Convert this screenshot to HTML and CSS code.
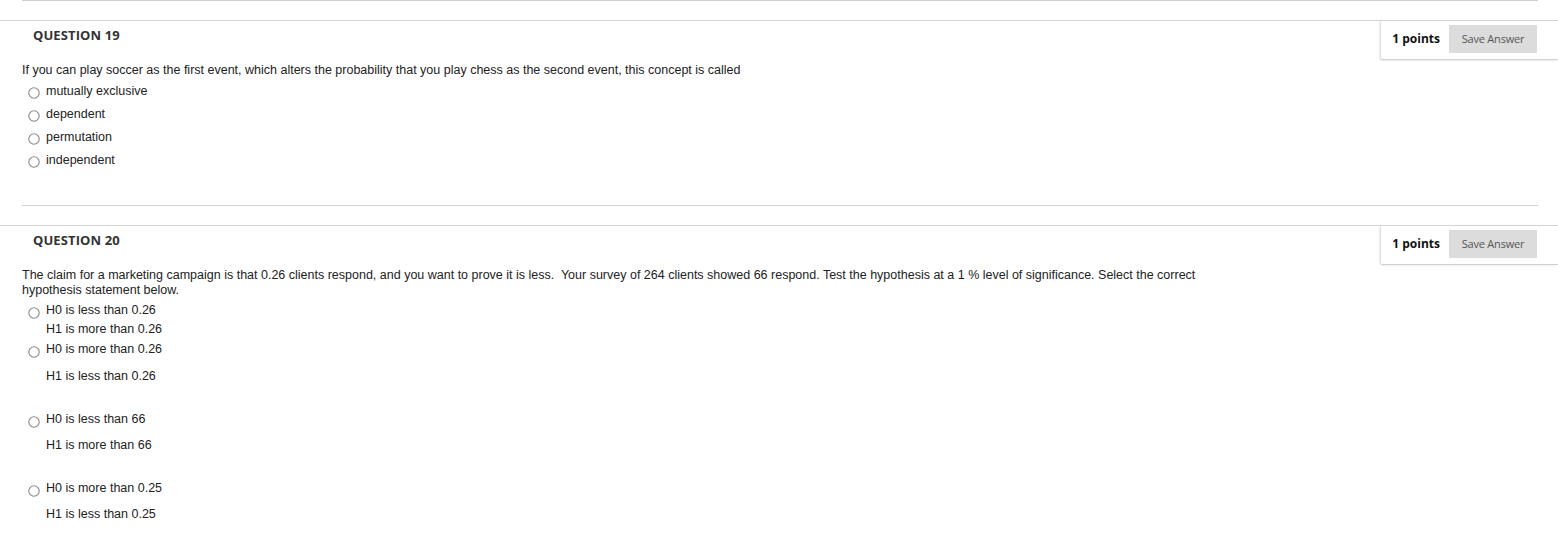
FILE: index.html
```html
<!DOCTYPE html>
<html>
<head>
<meta charset="utf-8">
<link rel="stylesheet" href="styles.css">
</head>
<body>
<div class="prev-end"></div>

<section class="question">
  <div class="q-head">
    <h3 class="q-title">QUESTION 19</h3>
    <div class="points">
      <span class="pts">1 points</span>
      <button class="save">Save Answer</button>
    </div>
  </div>
  <div class="q-body q19">
    <p class="q-text">If you can play soccer as the first event, which alters the probability that you play chess as the second event, this concept is called</p>
    <ul class="options">
      <li class="opt"><span class="radio"><svg width="12" height="12" viewBox="0 0 12 12"><circle cx="6" cy="6" r="5.2" fill="#fff" stroke="#8a8a8a" stroke-width="1.1"/></svg></span><label>mutually exclusive</label></li>
      <li class="opt"><span class="radio"><svg width="12" height="12" viewBox="0 0 12 12"><circle cx="6" cy="6" r="5.2" fill="#fff" stroke="#8a8a8a" stroke-width="1.1"/></svg></span><label>dependent</label></li>
      <li class="opt"><span class="radio"><svg width="12" height="12" viewBox="0 0 12 12"><circle cx="6" cy="6" r="5.2" fill="#fff" stroke="#8a8a8a" stroke-width="1.1"/></svg></span><label>permutation</label></li>
      <li class="opt"><span class="radio"><svg width="12" height="12" viewBox="0 0 12 12"><circle cx="6" cy="6" r="5.2" fill="#fff" stroke="#8a8a8a" stroke-width="1.1"/></svg></span><label>independent</label></li>
    </ul>
  </div>
  <div class="q-sep"></div>
</section>

<section class="question">
  <div class="q-head">
    <h3 class="q-title">QUESTION 20</h3>
    <div class="points">
      <span class="pts">1 points</span>
      <button class="save">Save Answer</button>
    </div>
  </div>
  <div class="q-body q20">
    <p class="q-text wrap">The claim for a marketing campaign is that 0.26 clients respond, and you want to prove it is less.&nbsp; Your survey of 264 clients showed 66 respond. Test the hypothesis at a 1 % level of significance. Select the correct hypothesis statement below.</p>
    <ul class="options hyp">
      <li class="opt h-a"><span class="radio"><svg width="12" height="12" viewBox="0 0 12 12"><circle cx="6" cy="6" r="5.2" fill="#fff" stroke="#8a8a8a" stroke-width="1.1"/></svg></span><div class="lines"><p>H0 is less than 0.26</p><p>H1 is more than 0.26</p></div></li>
      <li class="opt h-b h-wide"><span class="radio"><svg width="12" height="12" viewBox="0 0 12 12"><circle cx="6" cy="6" r="5.2" fill="#fff" stroke="#8a8a8a" stroke-width="1.1"/></svg></span><div class="lines"><p>H0 is more than 0.26</p><p>H1 is less than 0.26</p></div></li>
      <li class="opt h-b"><span class="radio"><svg width="12" height="12" viewBox="0 0 12 12"><circle cx="6" cy="6" r="5.2" fill="#fff" stroke="#8a8a8a" stroke-width="1.1"/></svg></span><div class="lines"><p>H0 is less than 66</p><p>H1 is more than 66</p></div></li>
      <li class="opt h-b"><span class="radio"><svg width="12" height="12" viewBox="0 0 12 12"><circle cx="6" cy="6" r="5.2" fill="#fff" stroke="#8a8a8a" stroke-width="1.1"/></svg></span><div class="lines"><p>H0 is more than 0.25</p><p>H1 is less than 0.25</p></div></li>
    </ul>
  </div>
</section>
</body>
</html>
```

FILE: styles.css
```css
html, body {
  margin: 0;
  padding: 0;
  background: #fff;
}
body {
  font-family: "Liberation Sans", Arial, sans-serif;
  font-size: 12.5px;
  color: #222;
  width: 1558px;
}
.prev-end {
  margin: 0 20px 0 22px;
  border-top: 1px solid #cfcfcf;
  height: 19px;
}
.question {
  border-top: 1px solid #d4d4d4;
}
.q-head {
  display: flex;
  justify-content: space-between;
  align-items: flex-start;
  height: 39px;
}
.q-title {
  margin: 5px 0 0 33px;
  font-family: "Open Sans", sans-serif;
  font-weight: 700;
  font-size: 13px;
  line-height: 18px;
  color: #333;
  letter-spacing: 0.1px;
}
.points {
  display: flex;
  align-items: center;
  gap: 9px;
  padding: 3px 21px 6px 11px;
  border-left: 1px solid #e0e0e0;
  border-bottom: 1px solid #cfcfcf;
  border-bottom-left-radius: 3px;
  box-shadow: -1px 1px 2px rgba(0,0,0,0.08);
  height: 29px;
}
.pts {
  font-family: "Open Sans", sans-serif;
  font-weight: 700;
  font-size: 12px;
  color: #111;
}
.save {
  width: 88px;
  height: 28px;
  border: 0;
  border-radius: 1px;
  background: #dcdcdc;
  font-family: "Open Sans", sans-serif;
  font-size: 11px;
  color: #555;
  padding: 0;
  letter-spacing: -0.2px;
}
.q-body {
  padding-left: 22px;
}
.q-text {
  margin: 3px 0 0 0;
  line-height: 15px;
}
.q-text.wrap {
  width: 1200px;
  margin-top: 3px;
}
.options {
  list-style: none;
  margin: 2px 0 0 0;
  padding: 0;
}
.opt {
  display: flex;
  align-items: flex-start;
}
.q19 .opt {
  height: 23px;
  line-height: 15px;
  padding-top: 4px;
  box-sizing: border-box;
}
.radio {
  width: 12px;
  height: 12px;
  margin: 6px 6px 0 6px;
  display: block;
}
.radio svg {
  display: block;
}
.q19 .radio {
  margin-top: 3px;
}
.q-sep {
  margin: 33px 20px 19px 22px;
  border-top: 1px solid #cfcfcf;
}
.hyp {
  margin-top: 3px;
}
.h-a {
  margin-bottom: 1px;
}
.lines p {
  margin: 0;
  line-height: 19px;
}
.h-b .lines p + p {
  margin-top: 7px;
}
.h-wide .lines p + p {
  margin-top: 8px;
}
.h-b + .h-b {
  margin-top: 24px;
}
```
